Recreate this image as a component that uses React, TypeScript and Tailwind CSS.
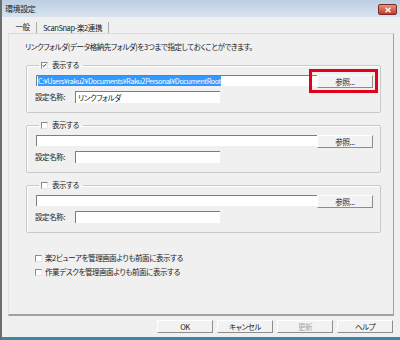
const groups = [
  { checked: true, path: "C:¥Users¥raku2¥Documents¥Raku2Personal¥DocumentRoot", name: "リンクフォルダ", marked: true },
  { checked: false, path: "", name: "", marked: false },
  { checked: false, path: "", name: "", marked: false },
];

const options = [
  "楽2ビューアを管理画面よりも前面に表示する",
  "作業デスクを管理画面よりも前面に表示する",
];

function Check({ checked }: { checked: boolean }) {
  return (
    <span className="relative flex h-[7px] w-[7px] shrink-0 border-t border-l border-b border-r border-t-[#8a8a8a] border-l-[#8a8a8a] border-b-[#e6e6e6] border-r-[#e6e6e6] bg-white">
      {checked && (
        <svg viewBox="0 0 7 7" className="absolute left-0 top-0 h-[5px] w-[5px]">
          <path d="M1 3.2 L2.6 5 L6 1" fill="none" stroke="#222" strokeWidth="1.2" />
        </svg>
      )}
    </span>
  );
}

function Btn({ label, disabled }: { label: string; disabled?: boolean }) {
  return (
    <button
      className={
        "flex h-[13px] w-[56px] items-center justify-center border border-t-white border-l-white border-b-[#8c8c8c] border-r-[#8c8c8c] bg-[#f2f2f2] text-[7.5px] leading-none " +
        (disabled ? "text-[#a8a8a8]" : "text-[#222]")
      }
    >
      {label}
    </button>
  );
}

function Group({ checked, path, name, marked }: (typeof groups)[number]) {
  return (
    <fieldset className="rounded-[2px] border border-[#c9c9c9] pl-[9px] pr-[7px] pb-[9px] shadow-[inset_1px_1px_0_#ffffff]">
      <legend className="ml-[3px] px-[2px]">
        <span className="flex h-[10px] items-center gap-[4px] pr-[2px]">
          <Check checked={checked} />
          <span>表示する</span>
        </span>
      </legend>

      <div className="mt-[5px] flex items-start justify-between">
        <div className="flex h-[11px] w-[281px] items-center overflow-hidden border-t border-l border-t-[#7d7d7d] border-l-[#7d7d7d] bg-white pl-px">
          {path && (
            <span className="whitespace-nowrap bg-[#3399ff] text-[7.2px] leading-[10px] text-white">{path}</span>
          )}
        </div>
        <div className="relative">
          <Btn label="参照..." />
          {/* red annotation box drawn over the button */}
          {marked && <span className="absolute -left-[8px] -top-[6px] -right-[5px] -bottom-[5px] border-[3px] border-[#e3001b]" />}
        </div>
      </div>

      <div className="mt-[3px] flex items-center gap-[6px]">
        <span className="-ml-px w-[34px] whitespace-nowrap">設定名称:</span>
        <div className="flex h-[12px] w-[145px] items-center border-t border-l border-t-[#7d7d7d] border-l-[#7d7d7d] bg-white pl-[2px]">
          {name}
        </div>
      </div>
    </fieldset>
  );
}

export default function App() {
  return (
    <div className="flex h-[340px] w-[400px] flex-col overflow-hidden border-l-2 border-[#6d6d6d] bg-[#f0f0f0] font-['Noto_Sans_CJK_JP',sans-serif] text-[7.5px] leading-[10px] tracking-[-0.4px] text-[#222] [font-feature-settings:'palt']">
      {/* title bar */}
      <div className="flex h-[17px] shrink-0 items-start justify-between bg-gradient-to-b from-[#bccee2] to-[#d8e3ef] pl-[3px] pr-[3px] pt-[4px]">
        <span className="text-[8px] text-[#1e1e1e]">環境設定</span>
        <span className="flex h-[11px] w-[19px] items-center justify-center rounded-[2px] border border-[#7b2a22] bg-gradient-to-b from-[#e3917f] to-[#c23a26]">
          <svg viewBox="0 0 8 6" className="h-[6px] w-[8px]">
            <path d="M1.5 0.8 L6.5 5.2 M6.5 0.8 L1.5 5.2" stroke="#fff" strokeWidth="1.5" />
          </svg>
        </span>
      </div>

      {/* tabs */}
      <div className="flex h-[16px] shrink-0 items-end pl-[7px]">
        <div className="flex h-[16px] w-[27px] items-center justify-center pt-[4px]">一般</div>
        <div className="flex h-[11px] w-[73px] items-center justify-center border-l border-r border-[#a9a9a9]">
          ScanSnap-楽2連携
        </div>
      </div>

      {/* tab panel */}
      <div className="ml-[6px] mr-[6px] flex flex-1 flex-col border-t border-l border-r border-b-2 border-t-[#dadada] border-l-[#e2e2e2] border-r-[#a3a3a3] border-b-[#a0a0a0] pl-[17px] pr-[12px] pt-[8px]">
        <p className="-ml-px">リンクフォルダ(データ格納先フォルダ)を3つまで指定しておくことができます。</p>

        <div className="mt-[8px] flex flex-col gap-[7px]">
          {groups.map((g, i) => (
            <Group key={i} {...g} />
          ))}
        </div>

        <div className="mt-[20px] flex flex-col gap-[4px] pl-[9px]">
          {options.map((o) => (
            <label key={o} className="flex h-[10px] items-center gap-[3px]">
              <Check checked={false} />
              <span>{o}</span>
            </label>
          ))}
        </div>
      </div>

      {/* footer buttons */}
      <div className="flex h-[21px] shrink-0 items-center justify-end gap-[4px] pr-[7px]">
        <Btn label="OK" />
        <Btn label="キャンセル" />
        <Btn label="更新" disabled />
        <Btn label="ヘルプ" />
      </div>
      <div className="h-[3px] shrink-0 bg-[#3c86a6]" />
    </div>
  );
}
